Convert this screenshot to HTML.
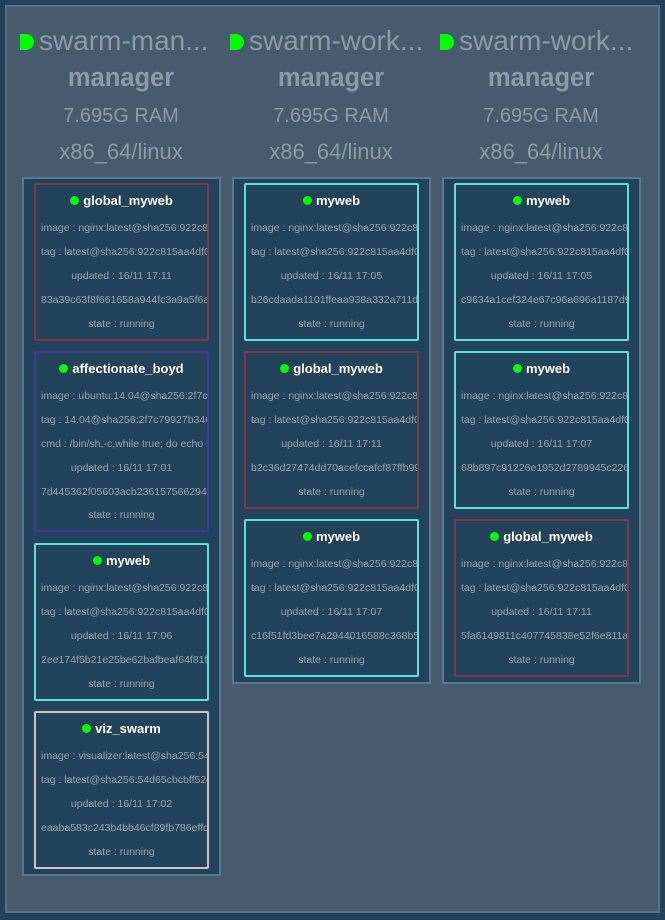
<!DOCTYPE html>
<html><head><meta charset="utf-8"><style>
*{margin:0;padding:0;box-sizing:border-box}
body{width:665px;height:920px;background:#234157;font-family:"Liberation Sans","DejaVu Sans",sans-serif;position:relative;overflow:hidden}
.panel{position:absolute;left:5px;top:5px;width:655px;height:908px;background:#465b6d;border:2px solid #587287}
.hdr{position:absolute;width:210px;text-align:center;color:#8e9ba6}
.name{position:absolute;top:25px;font-size:28px;white-space:nowrap;left:0;width:214px;text-align:left;padding-left:4px;overflow:hidden}
.name i{display:inline-block;width:14px;height:16px;background:#0f0;border-radius:0 8px 8px 0;vertical-align:0px;margin-right:5px}
.role{position:absolute;top:64px;width:210px;font-size:25.5px;font-weight:bold}
.ram{position:absolute;top:105px;width:210px;font-size:20px}
.arch{position:absolute;top:139px;width:210px;font-size:22px}
.cont{position:absolute;top:177px;width:199px;background:#23435a;border:2px solid #587a90}
.card{position:absolute;left:10px;width:175px;border:2px solid;border-radius:2px;text-align:center;overflow:hidden;white-space:nowrap;padding:0 5px}
.card .t{color:#fff;font-weight:bold;font-size:13px;margin-top:8px;height:24px}
.card .t b{display:inline-block;width:9px;height:9px;background:#0f0;border-radius:50%;margin-right:4px;vertical-align:0}
.card div.l{font-size:10.5px;color:#97a4ae;height:23.9px;line-height:23.9px}
.red{border-color:#7a3b4c}.pur{border-color:#3b3a9c}.cy{border-color:#5fe2d6}.wh{border-color:#cbc3c4}
</style></head><body>
<div class="panel"></div>

<div class="hdr" style="left:16px;top:0"><div class="name"><i></i>swarm-man...</div><div class="role">manager</div><div class="ram">7.695G RAM</div><div class="arch">x86_64/linux</div></div>
<div class="hdr" style="left:226px;top:0"><div class="name"><i></i>swarm-work...</div><div class="role">manager</div><div class="ram">7.695G RAM</div><div class="arch">x86_64/linux</div></div>
<div class="hdr" style="left:436px;top:0"><div class="name"><i></i>swarm-work...</div><div class="role">manager</div><div class="ram">7.695G RAM</div><div class="arch">x86_64/linux</div></div>

<div class="cont" style="left:22px;height:699px">
 <div class="card red" style="top:4px;height:158px"><div class="t"><b></b>global_myweb</div><div class="l">image : nginx:latest@sha256:922c815aa4df05</div><div class="l">tag : latest@sha256:922c815aa4df050d4df</div><div class="l">updated : 16/11 17:11</div><div class="l">83a39c63f8f661658a944fc3a9a5f6a4</div><div class="l">state : running</div></div>
 <div class="card pur" style="top:172px;height:181px"><div class="t"><b></b>affectionate_boyd</div><div class="l">image : ubuntu:14.04@sha256:2f7c79927b</div><div class="l">tag : 14.04@sha256:2f7c79927b346e436</div><div class="l">cmd : /bin/sh,-c,while true; do echo hello</div><div class="l">updated : 16/11 17:01</div><div class="l">7d445362f05603acb23615756629413</div><div class="l">state : running</div></div>
 <div class="card cy" style="top:364px;height:158px"><div class="t"><b></b>myweb</div><div class="l">image : nginx:latest@sha256:922c815aa4df05</div><div class="l">tag : latest@sha256:922c815aa4df050d4df</div><div class="l">updated : 16/11 17:06</div><div class="l">2ee174f5b21e25be62bafbeaf64f81f5</div><div class="l">state : running</div></div>
 <div class="card wh" style="top:532px;height:158px"><div class="t"><b></b>viz_swarm</div><div class="l">image : visualizer:latest@sha256:54d65cb</div><div class="l">tag : latest@sha256:54d65cbcbff52ee7d</div><div class="l">updated : 16/11 17:02</div><div class="l">eaaba583c243b4bb46cf89fb786effd5</div><div class="l">state : running</div></div>
</div>

<div class="cont" style="left:232px;height:507px">
 <div class="card cy" style="top:4px;height:158px"><div class="t"><b></b>myweb</div><div class="l">image : nginx:latest@sha256:922c815aa4df05</div><div class="l">tag : latest@sha256:922c815aa4df050d4df</div><div class="l">updated : 16/11 17:05</div><div class="l">b26cdaada1101ffeaa938a332a711dd5</div><div class="l">state : running</div></div>
 <div class="card red" style="top:172px;height:158px"><div class="t"><b></b>global_myweb</div><div class="l">image : nginx:latest@sha256:922c815aa4df05</div><div class="l">tag : latest@sha256:922c815aa4df050d4df</div><div class="l">updated : 16/11 17:11</div><div class="l">b2c36d27474dd70acefccafcf87ffb990</div><div class="l">state : running</div></div>
 <div class="card cy" style="top:340px;height:158px"><div class="t"><b></b>myweb</div><div class="l">image : nginx:latest@sha256:922c815aa4df05</div><div class="l">tag : latest@sha256:922c815aa4df050d4df</div><div class="l">updated : 16/11 17:07</div><div class="l">c16f51fd3bee7a2944016588c368b5a5</div><div class="l">state : running</div></div>
</div>

<div class="cont" style="left:442px;height:507px">
 <div class="card cy" style="top:4px;height:158px"><div class="t"><b></b>myweb</div><div class="l">image : nginx:latest@sha256:922c815aa4df05</div><div class="l">tag : latest@sha256:922c815aa4df050d4df</div><div class="l">updated : 16/11 17:05</div><div class="l">c9634a1cef324e67c96a696a1187d93a</div><div class="l">state : running</div></div>
 <div class="card cy" style="top:172px;height:158px"><div class="t"><b></b>myweb</div><div class="l">image : nginx:latest@sha256:922c815aa4df05</div><div class="l">tag : latest@sha256:922c815aa4df050d4df</div><div class="l">updated : 16/11 17:07</div><div class="l">68b897c91226e1952d2789945c226d5a</div><div class="l">state : running</div></div>
 <div class="card red" style="top:340px;height:158px"><div class="t"><b></b>global_myweb</div><div class="l">image : nginx:latest@sha256:922c815aa4df05</div><div class="l">tag : latest@sha256:922c815aa4df050d4df</div><div class="l">updated : 16/11 17:11</div><div class="l">5fa6149811c407745838e52f6e811a1a</div><div class="l">state : running</div></div>
</div>
</body></html>
